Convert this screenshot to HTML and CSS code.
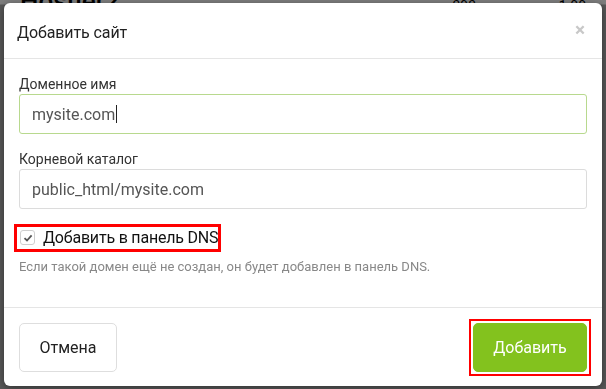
FILE: index.html
```html
<!DOCTYPE html>
<html lang="ru">
<head>
<meta charset="utf-8">
<title>Добавить сайт</title>
<link rel="stylesheet" href="styles.css">
</head>
<body>
<div class="page">
  <div class="page-row">
    <span class="page-title">Hostler2</span>
    <span class="page-num">393</span>
    <span class="page-num">1.00</span>
  </div>
</div>
<div class="overlay"></div>
<div class="modal">
  <div class="modal-header">
    <h4 class="modal-title">Добавить сайт</h4>
    <span class="close">×</span>
  </div>
  <div class="modal-body">
    <div class="form-group">
      <label class="control-label">Доменное имя</label>
      <div class="form-control focused">mysite.com<span class="caret"></span></div>
    </div>
    <div class="form-group">
      <label class="control-label">Корневой каталог</label>
      <div class="form-control">public_html/mysite.com</div>
    </div>
    <div class="check-wrap">
      <label class="check-row">
        <span class="checkbox">
          <svg width="10" height="10" viewBox="0 0 10 10"><path d="M1.5 5.2 L4 7.5 L8.6 2.4" fill="none" stroke="#555" stroke-width="1.8"/></svg>
        </span>
        <span class="check-text">Добавить в панель DNS</span>
      </label>
    </div>
    <p class="help-block">Если такой домен ещё не создан, он будет добавлен в панель DNS.</p>
  </div>
  <div class="modal-footer">
    <button class="btn btn-default">Отмена</button>
    <span class="highlight"><button class="btn btn-success">Добавить</button></span>
  </div>
</div>
</body>
</html>
```
FILE: styles.css
```css
html, body {
  margin: 0;
  padding: 0;
  height: 100%;
}
body {
  background: #ffffff;
  font-family: Roboto, "Noto Sans", sans-serif;
  color: #333;
  overflow: hidden;
}
.page {
  padding: 0 20px;
}
.page-row {
  display: flex;
  align-items: flex-start;
  height: 40px;
  margin-top: -14px;
}
.page-title {
  font-size: 26px;
  font-weight: 500;
  color: #000;
  flex: 1;
}
.page-num {
  font-size: 14px;
  color: #000;
  width: 110px;
  padding-top: 12px;
  text-align: right;
}
.overlay {
  position: fixed;
  inset: 0;
  background: linear-gradient(to bottom, rgba(0,0,0,0.5) 0, rgba(0,0,0,0.5) 4px, rgba(0,0,0,0.65) 5px);
}
.modal {
  position: absolute;
  left: 4px;
  top: 3px;
  width: 598px;
  height: 383px;
  box-sizing: border-box;
  background: #fff;
  border-radius: 6px;
  box-shadow: 0 2px 8px rgba(0,0,0,0.45);
  display: flex;
  flex-direction: column;
}
.modal-header {
  height: 56px;
  box-sizing: border-box;
  border-bottom: 1px solid #e5e5e5;
  padding: 4px 13px 0 13px;
  display: flex;
  align-items: center;
  justify-content: space-between;
}
.modal-title {
  margin: 0;
  font-size: 16px;
  font-weight: 400;
  color: #222;
  letter-spacing: -0.1px;
}
.close {
  font-size: 19px;
  font-weight: 700;
  color: #c8c8c8;
  line-height: 1;
  margin-right: 4px;
  margin-top: -6px;
}
.modal-body {
  padding: 15px;
  flex: 1;
}
.form-group {
  margin-bottom: 15px;
}
.control-label {
  display: block;
  font-size: 14px;
  line-height: 20px;
  height: 20px;
  color: #333;
}
.form-control {
  height: 40px;
  box-sizing: border-box;
  border: 1px solid #dcdcdc;
  border-radius: 3px;
  padding: 0 12px;
  display: flex;
  align-items: center;
  font-size: 16px;
  color: #555;
}
.form-control.focused {
  border-color: #b8d98e;
}
.caret {
  display: inline-block;
  width: 1px;
  height: 18px;
  background: #222;
  margin-left: 1px;
}
.check-wrap {
  height: 27px;
  display: flex;
  align-items: center;
  margin-left: -2px;
}
.check-row {
  display: inline-flex;
  align-items: center;
  gap: 8px;
  padding: 0 0 0 3px;
  height: 22px;
  outline: 3px solid #ff0000;
  outline-offset: 0;
}
.checkbox {
  width: 15px;
  height: 15px;
  border: 1px solid #cfcfcf;
  border-radius: 3px;
  display: flex;
  align-items: center;
  justify-content: center;
  box-sizing: border-box;
}
.check-text {
  font-size: 16px;
  color: #111;
  letter-spacing: -0.2px;
}
.help-block {
  margin: 7px 0 0 0;
  font-size: 13px;
  line-height: 17px;
  color: #888;
}
.modal-footer {
  border-top: 1px solid #e5e5e5;
  padding: 15px 15px 14px 15px;
  display: flex;
  justify-content: space-between;
  align-items: center;
}
.btn {
  height: 49px;
  border-radius: 5px;
  font-family: inherit;
  font-size: 16px;
  padding: 0 16px;
  cursor: pointer;
  display: block;
}
.btn-default {
  background: #fff;
  border: 1px solid #dedede;
  color: #222;
  width: 98px;
}
.highlight {
  display: block;
  border: 2px solid #ff0000;
  padding: 2px;
  margin: -4px -4px -4px 0;
}
.btn-success {
  background: #83c21e;
  border: 1px solid #83c21e;
  color: #fff;
  width: 114px;
}
```
